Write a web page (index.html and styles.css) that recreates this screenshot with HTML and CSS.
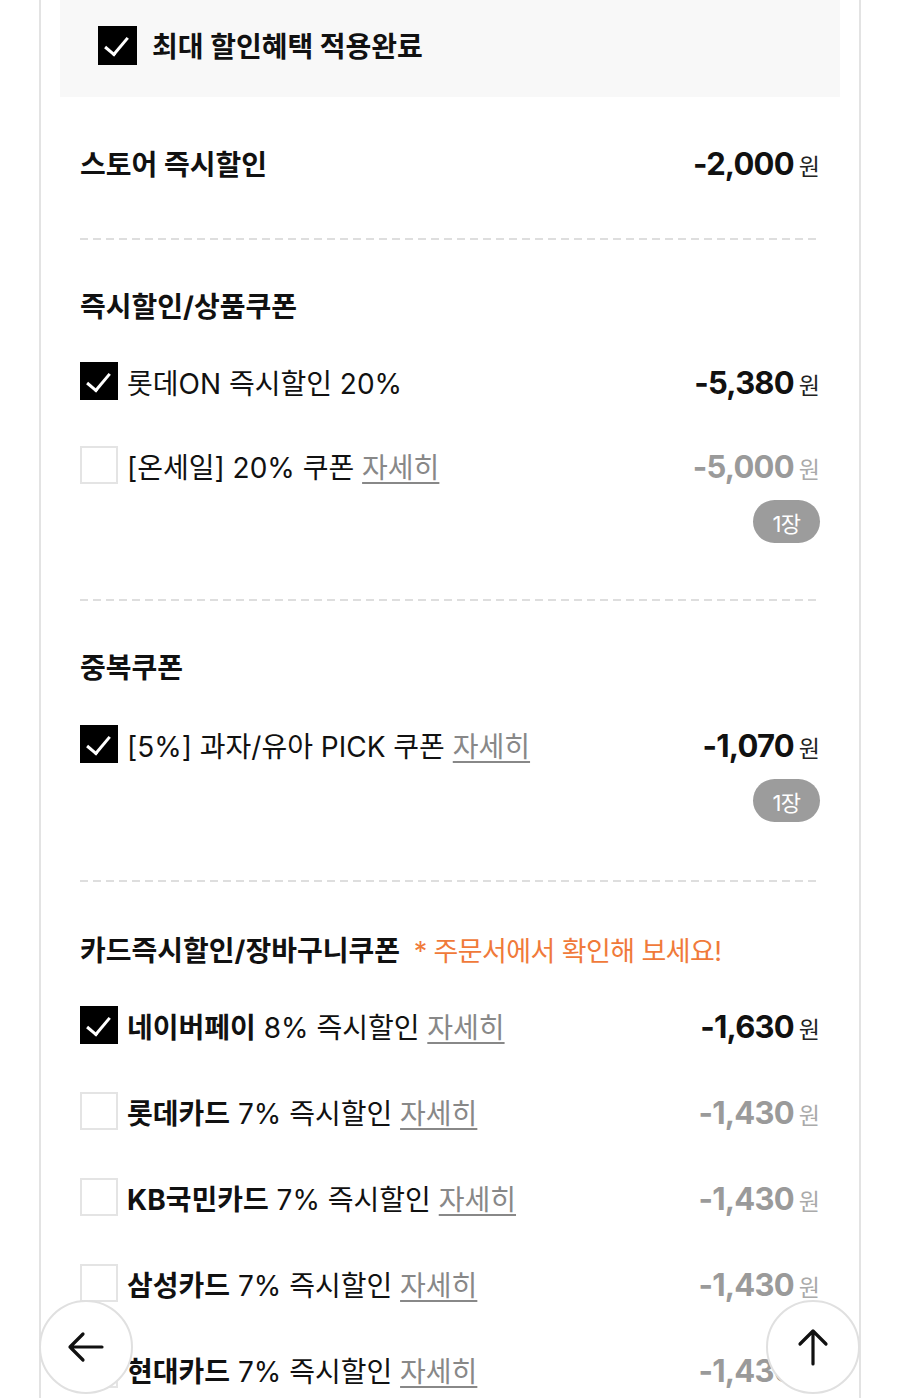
FILE: index.html
```html
<!DOCTYPE html>
<html lang="ko">
<head>
    <meta charset="UTF-8">
    <meta name="viewport" content="width=device-width, initial-scale=1.0">
    <title>할인혜택</title>
    <link rel="stylesheet" href="styles.css">
</head>
<body>
    <div class="panel">
        <!-- 최대 할인 적용 -->
        <div class="summary">
            <span class="check on big"></span>
            <span class="summary-text">최대 할인혜택 적용완료</span>
        </div>

        <div class="section first">
            <div class="row">
                <div class="title">스토어 즉시할인</div>
                <div class="price"><b>-2,000</b><span class="won">원</span></div>
            </div>
        </div>
        <div class="divider"></div>

        <div class="section">
            <div class="title">즉시할인/상품쿠폰</div>
            <ul class="list">
                <li class="item">
                    <span class="check on"></span>
                    <span class="label">롯데ON 즉시할인 20%</span>
                    <div class="price-col">
                        <div class="price"><b>-5,380</b><span class="won">원</span></div>
                    </div>
                </li>
                <li class="item">
                    <span class="check"></span>
                    <span class="label">[온세일] 20% 쿠폰 <a class="more">자세히</a></span>
                    <div class="price-col">
                        <div class="price off"><b>-5,000</b><span class="won">원</span></div>
                        <span class="badge">1장</span>
                    </div>
                </li>
            </ul>
        </div>
        <div class="divider"></div>

        <div class="section dup">
            <div class="title">중복쿠폰</div>
            <ul class="list">
                <li class="item">
                    <span class="check on"></span>
                    <span class="label">[5%] 과자/유아 PICK 쿠폰 <a class="more">자세히</a></span>
                    <div class="price-col">
                        <div class="price"><b>-1,070</b><span class="won">원</span></div>
                        <span class="badge">1장</span>
                    </div>
                </li>
            </ul>
        </div>
        <div class="divider"></div>

        <div class="section card">
            <div class="title">카드즉시할인/장바구니쿠폰 <span class="notice">* 주문서에서 확인해 보세요!</span></div>
            <ul class="list cards">
                <li class="item">
                    <span class="check on"></span>
                    <span class="label"><b>네이버페이</b> 8% 즉시할인 <a class="more">자세히</a></span>
                    <div class="price-col">
                        <div class="price"><b>-1,630</b><span class="won">원</span></div>
                    </div>
                </li>
                <li class="item">
                    <span class="check"></span>
                    <span class="label"><b>롯데카드</b> 7% 즉시할인 <a class="more">자세히</a></span>
                    <div class="price-col">
                        <div class="price off"><b>-1,430</b><span class="won">원</span></div>
                    </div>
                </li>
                <li class="item">
                    <span class="check"></span>
                    <span class="label"><b>KB국민카드</b> 7% 즉시할인 <a class="more">자세히</a></span>
                    <div class="price-col">
                        <div class="price off"><b>-1,430</b><span class="won">원</span></div>
                    </div>
                </li>
                <li class="item">
                    <span class="check"></span>
                    <span class="label"><b>삼성카드</b> 7% 즉시할인 <a class="more">자세히</a></span>
                    <div class="price-col">
                        <div class="price off"><b>-1,430</b><span class="won">원</span></div>
                    </div>
                </li>
                <li class="item">
                    <span class="check"></span>
                    <span class="label"><b>현대카드</b> 7% 즉시할인 <a class="more">자세히</a></span>
                    <div class="price-col">
                        <div class="price off"><b>-1,430</b><span class="won">원</span></div>
                    </div>
                </li>
            </ul>
        </div>
    </div>

    <!-- 플로팅 버튼 -->
    <button class="fab back" aria-label="뒤로">
        <svg viewBox="0 0 40 40" width="40" height="40"><path d="M36 20 H4 M17 7 L4 20 L17 33" fill="none" stroke="#111" stroke-width="3.2" stroke-linecap="round" stroke-linejoin="round"/></svg>
    </button>
    <button class="fab top" aria-label="맨 위로">
        <svg viewBox="0 0 40 40" width="40" height="40"><path d="M20 37 V4 M7 17 L20 4 L33 17" fill="none" stroke="#111" stroke-width="3.2" stroke-linecap="round" stroke-linejoin="round"/></svg>
    </button>
</body>
</html>
```

FILE: styles.css
```css
* {
    box-sizing: border-box;
}

html, body {
    margin: 0;
    height: 100%;
    overflow: hidden;
}

body {
    background: #fff;
    font-family: Inter, "Noto Sans CJK KR", sans-serif;
    color: #111;
}

.panel {
    margin: 0 39px;
    min-height: 100%;
    border-left: 2px solid #e3e3e3;
    border-right: 2px solid #e3e3e3;
    padding: 0 19px;
}

.summary {
    height: 97px;
    background: #f8f8f8;
    display: flex;
    align-items: center;
    padding: 0 0 8px 38px;
    gap: 15px;
}

.summary .check {
    margin-top: 2px;
}

.summary-text {
    font-size: 28px;
    font-weight: 700;
    letter-spacing: 0;
}

/* 체크박스 */
.check {
    flex: none;
    width: 38px;
    height: 38px;
    border: 2px solid #e4e4e4;
    background: #fff;
    position: relative;
}

.check.big {
    width: 39px;
    height: 39px;
}

.check.on {
    background: #000;
    border-color: #000;
}

.check.on::after {
    content: "";
    position: absolute;
    left: 10px;
    top: 4px;
    width: 10px;
    height: 20px;
    border-right: 3px solid #fff;
    border-bottom: 3px solid #fff;
    transform: rotate(40deg);
}

.section {
    padding: 45px 20px 56px;
}

.section.first {
    padding: 46px 20px 55px;
}

.section.dup {
    padding-bottom: 58px;
}

.section.dup .list {
    margin-top: 39px;
}

.section.card {
    padding-top: 47px;
}

.row {
    display: flex;
    justify-content: space-between;
    align-items: center;
    height: 40px;
}

/* 텍스트는 40px 줄 안에서 살짝 아래로 */
.title,
.label,
.price {
    height: 40px;
    line-height: 45px;
    white-space: nowrap;
}

.title {
    font-size: 28px;
    font-weight: 700;
    letter-spacing: 0;
}

.notice {
    font-size: 27px;
    font-weight: 400;
    color: #f07a3a;
    margin-left: 7px;
    letter-spacing: -0.6px;
}

.divider {
    height: 2px;
    margin: 0 20px;
    background-image: repeating-linear-gradient(to right, #dedede 0 8px, transparent 8px 13px);
}

.list {
    list-style: none;
    margin: 37px 0 0;
    padding: 0;
    display: flex;
    flex-direction: column;
    gap: 44px;
}

.list.cards {
    gap: 46px;
}

.item {
    display: flex;
    align-items: flex-start;
    min-height: 40px;
}

.label {
    flex: 1;
    margin-left: 9px;
    font-size: 28px;
    letter-spacing: 0;
}

.label b {
    font-weight: 700;
}

.more {
    color: #888;
    text-decoration: underline;
    text-underline-offset: 4px;
    text-decoration-thickness: 1.5px;
}

.price-col {
    display: flex;
    flex-direction: column;
    align-items: flex-end;
}

.price {
    font-size: 31px;
    line-height: 41px;
    color: #111;
}

.price b {
    font-weight: 700;
    letter-spacing: -0.8px;
}

.won {
    font-size: 23px;
    margin-left: 5px;
    color: #222;
}

.price.off b {
    color: #9a9a9a;
}

.price.off .won {
    color: #aaa;
}

.badge {
    margin-top: 14px;
    width: 67px;
    height: 43px;
    border-radius: 22px;
    background: #9c9c9c;
    color: #fff;
    font-size: 22px;
    display: flex;
    align-items: center;
    justify-content: center;
    letter-spacing: -0.5px;
}

/* 플로팅 버튼 */
.fab {
    position: fixed;
    top: 1300px;
    width: 94px;
    height: 94px;
    border-radius: 50%;
    border: 2px solid #e0e0e0;
    background: #fff;
    padding: 0;
    display: flex;
    align-items: center;
    justify-content: center;
}

.fab.back {
    left: 39px;
}

.fab.top {
    left: 766px;
}
```
